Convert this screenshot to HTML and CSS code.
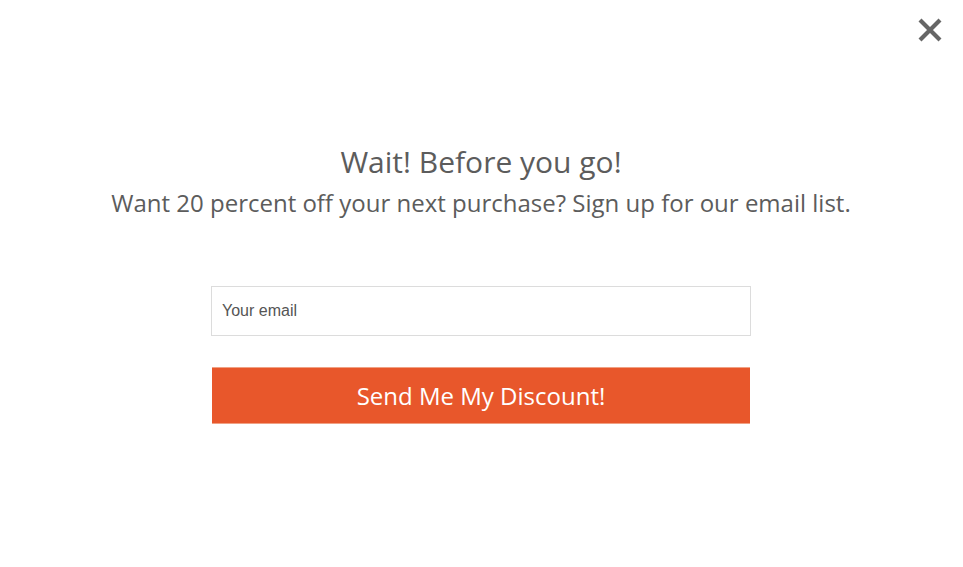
FILE: index.html
```html
<!DOCTYPE html>
<html>
<head>
<meta charset="utf-8">
<link rel="stylesheet" href="styles.css">
</head>
<body>
<div class="modal">
  <button class="close" aria-label="Close">
    <svg width="26" height="26" viewBox="0 0 26 26"><path d="M3 3 L23 23 M23 3 L3 23" stroke="#666" stroke-width="4.2" stroke-linecap="butt" fill="none"/></svg>
  </button>
  <div class="content">
    <h1 class="title">Wait! Before you go!</h1>
    <p class="subtitle">Want 20 percent off your next purchase? Sign up for our email list.</p>
    <form class="form">
      <input class="email" type="text" placeholder="Your email">
      <button class="submit" type="button">Send Me My Discount!</button>
    </form>
  </div>
</div>
</body>
</html>
```
FILE: styles.css
```css
html, body {
  margin: 0;
  padding: 0;
  background: #fff;
}
.modal {
  position: relative;
  width: 962px;
  height: 567px;
  font-family: "Open Sans", sans-serif;
}
.close {
  position: absolute;
  top: 17px;
  right: 19px;
  width: 26px;
  height: 26px;
  padding: 0;
  border: 0;
  background: none;
  display: flex;
}
.content {
  display: flex;
  flex-direction: column;
  align-items: center;
  padding-top: 142px;
}
.title {
  margin: 0;
  font-size: 30px;
  font-weight: 400;
  color: #5c5c5c;
  line-height: 40px;
}
.subtitle {
  margin: 0;
  font-size: 24px;
  color: #5c5c5c;
  line-height: 41px;
}
.form {
  display: flex;
  flex-direction: column;
  align-items: center;
  margin-top: 63px;
  gap: 31px;
}
.email {
  box-sizing: border-box;
  width: 540px;
  height: 50px;
  border: 1px solid #dcdcdc;
  padding: 0 10px;
  font-family: "Liberation Sans", Arial, sans-serif;
  font-size: 16px;
  outline: none;
}
.email::placeholder {
  color: #555;
}
.submit {
  box-sizing: border-box;
  width: 538px;
  height: 57px;
  border: 1px solid #f0a184;
  border-width: 1px 0;
  background: #e8572b;
  color: #fff;
  font-family: "Open Sans", sans-serif;
  font-size: 24px;
  padding: 0;
}
```
